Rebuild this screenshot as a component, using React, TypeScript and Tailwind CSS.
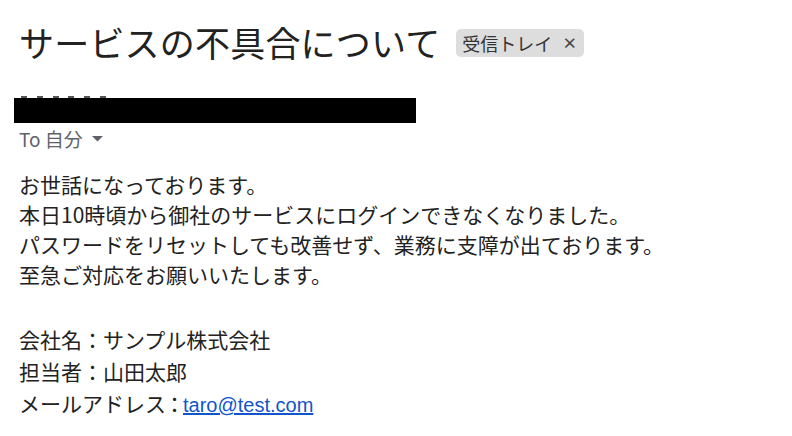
import React from "react";

const font = {
  fontFamily: '"Noto Sans CJK JP", "Noto Sans", "Liberation Sans", sans-serif',
};

// tops of the sender name peeking out above the redaction bar
const nameMarks = [21, 37, 53, 68, 84, 100];

const bodyLines = [
  "お世話になっております。",
  "本日10時頃から御社のサービスにログインできなくなりました。",
  "パスワードをリセットしても改善せず、業務に支障が出ております。",
  "至急ご対応をお願いいたします。",
];

export default function App() {
  return (
    <div className="w-[792px] h-[436px] bg-white overflow-hidden text-[#222222]" style={font}>
      {/* subject */}
      <div className="flex items-center pl-[19px] pt-[18px] h-[66px]">
        <h1 className="text-[35px] leading-[46px] font-normal tracking-[0.2px]">サービスの不具合について</h1>
        <span className="ml-[16px] mt-[2px] flex items-center h-[28px] rounded-[5px] bg-[#dddddd] pl-[6px] pr-[7px] text-[18px] text-[#333333]">
          受信トレイ
          <span className="ml-[10px] text-[15px] font-bold text-[#444444]">×</span>
        </span>
      </div>

      {/* sender (redacted) */}
      <div className="relative mt-[29px] h-[28px]">
        <div className="absolute left-0 top-[1px] h-[3px] w-full">
          {nameMarks.map((x) => (
            <div key={x} className="absolute top-0 h-[2px] w-[6px] bg-[#555555]" style={{ left: x }} />
          ))}
        </div>
        <div className="absolute left-[14px] top-[3px] h-[25px] w-[402px] bg-black" />
      </div>

      {/* recipients */}
      <div className="flex items-center pl-[19px] mt-[4px] h-[24px] text-[19px] text-[#5f6368]">
        <span>To 自分</span>
        <svg className="ml-[9px]" width="11" height="6" viewBox="0 0 11 6">
          <path d="M0 0 L11 0 L5.5 5.5 Z" fill="#5f6368" />
        </svg>
      </div>

      {/* body */}
      <div className="pl-[19px] mt-[18px] text-[21px]">
        {bodyLines.map((l) => (
          <div key={l} className="h-[30px] leading-[30px] whitespace-nowrap">{l}</div>
        ))}
        <div className="h-[34px]" />
        <div className="h-[32px] leading-[32px]">会社名：サンプル株式会社</div>
        <div className="h-[32px] leading-[32px]">担当者：山田太郎</div>
        <div className="h-[32px] leading-[32px]">
          メールアドレス<span className="-mx-[2px]">：</span>
          <a href="#" className="text-[#1155cc] underline text-[20px]" style={{ fontFamily: '"Liberation Sans", sans-serif' }}>
            taro@test.com
          </a>
        </div>
      </div>
    </div>
  );
}
